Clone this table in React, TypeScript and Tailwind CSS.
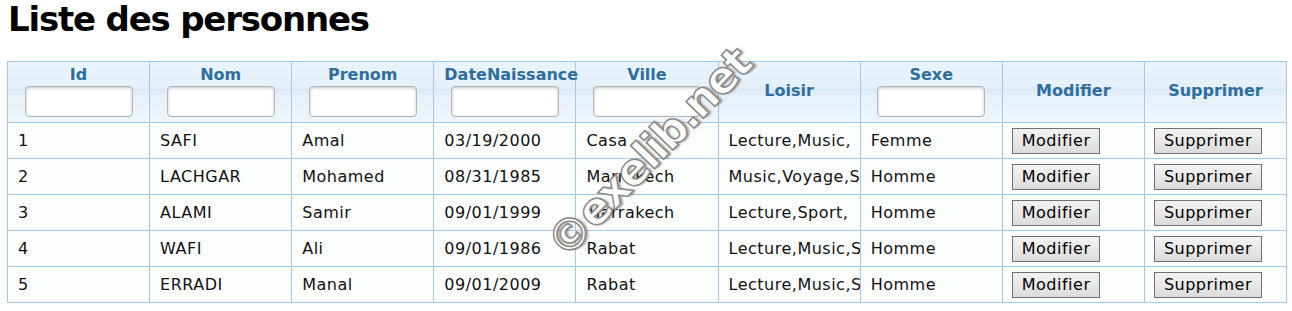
const rows = [
  ["1", "SAFI", "Amal", "03/19/2000", "Casa", "Lecture,Music,", "Femme"],
  ["2", "LACHGAR", "Mohamed", "08/31/1985", "Marrakech", "Music,Voyage,Sport,", "Homme"],
  ["3", "ALAMI", "Samir", "09/01/1999", "Marrakech", "Lecture,Sport,", "Homme"],
  ["4", "WAFI", "Ali", "09/01/1986", "Rabat", "Lecture,Music,Sport,", "Homme"],
  ["5", "ERRADI", "Manal", "09/01/2009", "Rabat", "Lecture,Music,Sport,", "Homme"],
];

const headers = [
  { label: "Id", filter: true },
  { label: "Nom", filter: true },
  { label: "Prenom", filter: true },
  { label: "DateNaissance", filter: true },
  { label: "Ville", filter: true },
  { label: "Loisir", filter: false },
  { label: "Sexe", filter: true },
  { label: "Modifier", filter: false },
  { label: "Supprimer", filter: false },
];

const ActionButton = ({ text }: { text: string }) => (
  <button className="h-[26px] px-[9px] border border-[#707070] bg-[linear-gradient(to_bottom,#f3f3f3,#dcdcdc)] text-[16px] leading-[22px] tracking-[0.5px] text-black">
    {text}
  </button>
);

const App = () => {
  return (
    <div className="w-[1292px] h-[311px] bg-white pl-[7px] pr-2 font-['DejaVu_Sans',sans-serif] overflow-hidden">
      <h1 className="mt-px mb-[24px] pl-px text-[34px] leading-[36px] font-bold tracking-[-1.2px] text-black">
        Liste des personnes
      </h1>
      <div className="relative">
        <table className="table-fixed border-collapse w-[1280px] bg-[#fcfdfd]">
          <thead>
            <tr className="h-[61px]">
              {headers.map((h) => (
                <th
                  key={h.label}
                  className="w-[142px] border border-[#a6c9e2] px-[10px] pt-[1px] pb-[3px] text-center align-middle whitespace-nowrap bg-[linear-gradient(to_bottom,#e9f3fd_0%,#e5f0fb_40%,#d9e7f5_45%,#e6f0fa_55%,#eef5fc_100%)] text-[16px] leading-[20px] font-bold text-[#2e6e9e]"
                >
                  <div>{h.label}</div>
                  {h.filter && (
                    <input className="block mx-auto mt-[1px] w-[108px] h-[31px] rounded-[4px] border border-[#b5b5b5] bg-white shadow-[inset_0_1px_3px_rgba(0,0,0,0.25)]" />
                  )}
                </th>
              ))}
            </tr>
          </thead>
          <tbody>
            {rows.map((r) => (
              <tr key={r[0]} className="h-[36px]">
                {r.map((c, i) => (
                  <td
                    key={i}
                    className="border border-[#a6c9e2] px-[10px] py-0 overflow-hidden whitespace-nowrap text-[16px] tracking-[0.5px] text-[#111]"
                  >
                    {c}
                  </td>
                ))}
                <td className="border border-[#a6c9e2] px-[9px] py-0">
                  <ActionButton text="Modifier" />
                </td>
                <td className="border border-[#a6c9e2] px-[9px] py-0">
                  <ActionButton text="Supprimer" />
                </td>
              </tr>
            ))}
          </tbody>
        </table>
        <div className="absolute left-[642px] top-[92px] w-0 h-0 pointer-events-none">
          <span className="absolute -translate-x-1/2 -translate-y-1/2 -rotate-[46deg] whitespace-nowrap font-['DejaVu_Sans',sans-serif] font-bold text-[44px] leading-none tracking-[-2px] text-white [-webkit-text-stroke:1.5px_#8a8a8a] [text-shadow:2px_2px_2px_rgba(0,0,0,0.35)]">
            ©exelib.net
          </span>
        </div>
      </div>
    </div>
  );
};

export default App;
